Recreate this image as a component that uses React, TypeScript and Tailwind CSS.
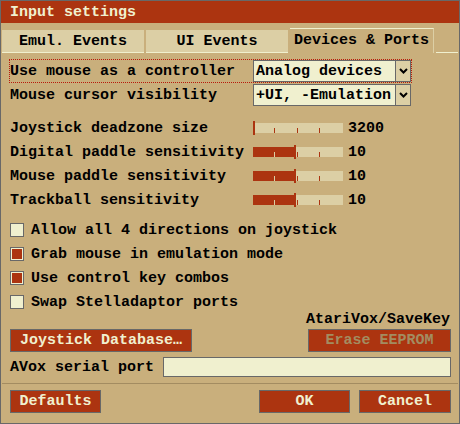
import React from "react";

const font = { fontFamily: '"Liberation Mono", "DejaVu Sans Mono", monospace' };

const sliders = [
    { label: "Joystick deadzone size", pos: 0, value: "3200" },
    { label: "Digital paddle sensitivity", pos: 41, value: "10" },
    { label: "Mouse paddle sensitivity", pos: 41, value: "10" },
    { label: "Trackball sensitivity", pos: 41, value: "10" },
];

const checks = [
    { label: "Allow all 4 directions on joystick", on: false },
    { label: "Grab mouse in emulation mode", on: true },
    { label: "Use control key combos", on: true },
    { label: "Swap Stelladaptor ports", on: false },
];

// Popup widget with the little arrow box on the right
const Dropdown = ({ text }: { text: string }) => (
    <div className="flex h-[22px] w-[158px] shrink-0 border border-[#686868] bg-[#f0f0cf]">
        <div className="flex flex-1 items-center pl-[2px] overflow-hidden whitespace-nowrap">{text}</div>
        <div className="flex w-[15px] items-center justify-center border-l border-[#686868] bg-[#dccfa5]">
            <svg width="9" height="6" viewBox="0 0 9 6">
                <path d="M1 1 L4.5 4.5 L8 1" stroke="#000" strokeWidth="2" fill="none" />
            </svg>
        </div>
    </div>
);

const Slider = ({ pos }: { pos: number }) => (
    <svg width="90" height="14" viewBox="0 0 90 14">
        <rect x="0" y="2" width="90" height="10" fill="#dccfa5" />
        <rect x="0" y="2" width={pos} height="10" fill="#ac3410" />
        {[21, 44, 66].map((t) => (
            <rect key={t} x={t} y="7" width="1" height="5" fill={t < pos ? "#dccfa5" : "#ac3410"} />
        ))}
        <rect x={pos} y="0" width="2" height="14" fill="#ac3410" />
    </svg>
);

const Checkbox = ({ on }: { on: boolean }) => (
    <div className="h-[14px] w-[14px] shrink-0 border border-[#686868] bg-[#f0f0cf] p-px">
        {on && <div className="h-full w-full bg-[#ac3410]" />}
    </div>
);

const Button = ({ label, w, disabled }: { label: string; w: string; disabled?: boolean }) => (
    <button
        className={`flex h-[23px] ${w} shrink-0 items-center justify-center border border-[#686868] bg-[#ac3410] ${
            disabled ? "text-[#a38c61]" : "text-[#f0f0cf]"
        }`}
    >
        {label}
    </button>
);

export default function App() {
    return (
        <div
            style={font}
            className="flex h-[424px] w-[460px] flex-col border border-[#686868] bg-[#c9af7c] text-[15px] font-bold leading-none text-black"
        >
            {/* Title */}
            <div className="flex h-[22px] shrink-0 items-center bg-[#ac3410] pl-[9px] text-[#f0f0cf]">Input settings</div>

            {/* Tabs */}
            <div className="mt-[5px] flex shrink-0 items-end gap-[2px] pl-px pr-[1px]">
                <div className="flex h-[23px] w-[142px] items-center justify-center border-b border-[#f0f0cf] bg-[#dccfa5]">
                    Emul. Events
                </div>
                <div className="flex h-[23px] w-[142px] items-center justify-center border-b border-[#f0f0cf] bg-[#dccfa5]">
                    UI Events
                </div>
                <div className="flex h-[25px] w-[144px] items-center justify-center border-t border-r border-t-[#f0f0cf] border-r-[#dccfa5] pb-px">
                    Devices &amp; Ports
                </div>
                <div className="flex-1 border-b border-[#f0f0cf]" />
            </div>

            <div className="flex shrink-0 flex-col pl-[8px] pr-[8px]">
                {/* Popups */}
                <div className="mt-[6px] flex h-[24px] w-[403px] items-center border border-dotted border-[#b81a0c]">
                    <span className="flex-1">Use mouse as a controller</span>
                    <Dropdown text="Analog devices" />
                </div>
                <div className="flex h-[24px] w-[403px] items-center border border-transparent">
                    <span className="flex-1">Mouse cursor visibility</span>
                    <Dropdown text="+UI, -Emulation" />
                </div>

                {/* Sliders */}
                <div className="mt-[9px] flex flex-col pl-px">
                    {sliders.map((s) => (
                        <div key={s.label} className="flex h-[24px] items-center">
                            <span className="w-[243px]">{s.label}</span>
                            <Slider pos={s.pos} />
                            <span className="ml-[5px]">{s.value}</span>
                        </div>
                    ))}
                </div>

                {/* Checkboxes */}
                <div className="mt-[6px] flex flex-col pl-px">
                    {checks.map((c) => (
                        <div key={c.label} className="flex h-[24px] items-center gap-[7px]">
                            <Checkbox on={c.on} />
                            <span>{c.label}</span>
                        </div>
                    ))}
                </div>

                {/* AtariVox */}
                <div className="-mt-[2px] flex h-[14px] items-center justify-end pr-[1px]">AtariVox/SaveKey</div>
                <div className="mt-[3px] flex justify-between pl-px">
                    <Button label="Joystick Database…" w="w-[182px]" />
                    <Button label="Erase EEPROM" w="w-[143px]" disabled />
                </div>
                <div className="mt-[5px] flex h-[20px] items-center pl-px">
                    <span className="w-[153px]">AVox serial port</span>
                    <div className="h-[20px] flex-1 border border-[#686868] bg-[#f0f0cf]" />
                </div>
            </div>

            <div className="mx-px mt-[6px] h-px shrink-0 bg-[#a38c61]" />

            <div className="mt-[6px] flex shrink-0 pl-[9px] pr-[8px]">
                <Button label="Defaults" w="w-[91px]" />
                <div className="flex-1" />
                <Button label="OK" w="w-[91px]" />
                <div className="w-[9px]" />
                <Button label="Cancel" w="w-[92px]" />
            </div>
        </div>
    );
}
